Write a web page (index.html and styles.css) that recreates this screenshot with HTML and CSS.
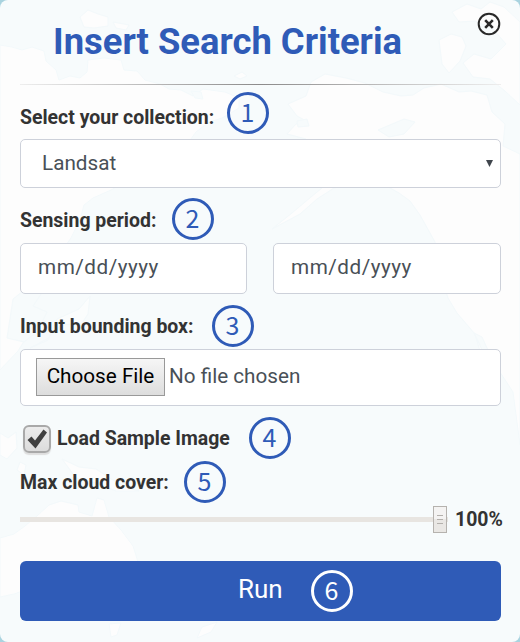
FILE: index.html
```html
<!DOCTYPE html>
<html lang="en">
<head>
<meta charset="utf-8">
<title>Insert Search Criteria</title>
<link rel="stylesheet" href="styles.css">
</head>
<body>
<main class="panel">
  <svg class="map" viewBox="0 0 520 642" aria-hidden="true">
    <path d="M0 45L12 47 22 50 32 47 44 51 46 61 56 70 59 80 70 76 80 78 87 72 88 60 104 58 121 60 124 70 137 71 145 80 160 84 169 89 181 90 193 96 203 89 225 92 239 98 239 108 222 118 209 122 196 132 188 143 178 151 161 158 145 170 127 181 111 190 93 198 84 205 80 220 71 238 61 252 58 270 41 280 27 293 24 309 30 332 18 351 0 370Z"/>
    <path d="M80 17L88 10 98 14 108 17 108 26 94 28 84 27ZM113 22L129 25 126 30 116 28ZM234 76L242 72 247 76 240 79Z"/>
    <path d="M288 104L306 96 311 82 325 74 346 78 365 83 383 92 401 96 413 95 424 88 441 84 459 92 471 91 487 95 492 112 505 124 503 146 520 154V445L513 392 496 366 480 351 475 334 457 313 448 298 439 269 435 242 420 215 410 201 399 193 383 184 358 182 334 188 317 199 300 214 272 229 292 213 311 197 322 188 306 180 294 164 290 151 306 139 287 134 296 124 308 122 297 116Z"/>
    <path d="M439 40L451 34 462 37 466 46 460 61 449 73 442 64ZM452 12L467 4 481 9 490 2 504 7 520 22V105L505 91 490 79 473 77 463 63 474 54 491 59 506 44 493 29 475 21 459 22Z"/>
    <path d="M0 538L14 534 25 526 37 516 49 505 61 501 78 505 79 512 92 516 97 498 104 500 109 517 121 530 133 546 139 565 129 583 114 603 96 607 80 595 61 586 31 588 14 594 0 597ZM109 624L121 623 117 635 111 637ZM202 627L217 622 211 632 197 638ZM62 459L79 467 96 469 111 479 128 488 139 491 116 491 96 483 76 478ZM0 433L8 438 16 432 17 448 7 459 0 455ZM20 462L26 465 24 475 17 470Z"/>
    <path class="sea" d="M378 130L404 119 415 122 404 134 389 137ZM297 121L307 119 309 126 298 127ZM474 333L482 337 487 348 499 365 486 358ZM191 91L201 92 203 99 195 98ZM13 299L28 287 41 294 33 306 47 312 38 331 24 342 7 338Z"/>
    <path class="coast" d="M30 348L48 340 57 319 79 309 90 296 88 314 82 323 61 325 47 339Z"/>
  </svg>
  <header class="head">
    <h1 class="title">Insert Search Criteria</h1>
    <svg class="close" viewBox="0 0 24 24" role="img" aria-label="Close"><circle cx="12" cy="12" r="10.3"/><path d="M8.2 8.2L15.8 15.8M15.8 8.2L8.2 15.8"/></svg>
  </header>
  <div class="rule"></div>
  <form class="form">
    <div class="row collection"><label class="label">Select your collection:</label><span class="step">1</span></div>
    <div class="field select"><span class="value">Landsat</span><svg class="arrow" viewBox="0 0 7 7"><path d="M0 0H7L3.5 7Z"/></svg></div>
    <div class="row period"><label class="label">Sensing period:</label><span class="step">2</span></div>
    <div class="dates">
      <div class="field date"><span class="value">mm/dd/yyyy</span></div>
      <div class="field date"><span class="value">mm/dd/yyyy</span></div>
    </div>
    <div class="row bounds"><label class="label">Input bounding box:</label><span class="step">3</span></div>
    <div class="field file"><span class="choose"><span class="choose-text">Choose File</span></span><span class="value">No file chosen</span></div>
    <div class="row sample">
      <span class="check"><svg class="tick" viewBox="0 0 22 22"><path d="M1.5 12L5.5 8.5 9 12.5 17.5 1.5 21 4.5 9.5 20.5Z"/></svg></span>
      <label class="label">Load Sample Image</label><span class="step">4</span>
    </div>
    <div class="row cloud"><label class="label">Max cloud cover:</label><span class="step">5</span></div>
    <div class="slider">
      <div class="track"><span class="thumb"><i></i><i></i><i></i></span></div>
      <span class="label percent">100%</span>
    </div>
    <div class="run"><span class="run-text">Run</span><span class="step light">6</span></div>
  </form>
</main>
</body>
</html>
```
FILE: styles.css
```css
* { box-sizing: border-box; }
body { margin: 0; background: #a9d3df; font-family: Roboto, sans-serif; color: #333; }
.panel { position: relative; width: 520px; height: 642px; padding: 0 19px 0 20px; border-radius: 8px; overflow: hidden; background: #f7fbfc; }
.map { position: absolute; left: 0; top: 0; width: 520px; height: 642px; fill: #fdfdfd; stroke: #f3f9fb; stroke-width: 1; }
.sea { fill: #f7fbfc; }
.coast { fill: #fbfdfd; }
.head, .rule, .form { position: relative; }
.head { display: flex; justify-content: space-between; height: 84px; padding-left: 33px; }
.title { margin: 21px 0 0; font-size: 36.4px; line-height: 42px; font-weight: 700; color: #2f5bb7; white-space: nowrap; }
.close { width: 24px; height: 24px; margin-top: 12px; fill: none; stroke: #292929; stroke-width: 2; }
.close path { stroke-width: 2.6; }
.rule { height: 1px; background: linear-gradient(90deg, #eee, #8c8b8b, #eee); }
.row { display: flex; align-items: center; height: 42px; }
.label { font-size: 19.45px; line-height: 24px; font-weight: 700; white-space: nowrap; }
.step { flex: none; display: flex; align-items: center; justify-content: center; width: 42px; height: 42px; padding: 0 1px 3px 0; border: 3px solid #2f5bb7; border-radius: 50%; color: #2f5bb7; font: 25px/33px "Noto Sans CJK SC", sans-serif; }
.collection { margin-top: 7px; }
.collection .label { width: 207px; margin-top: 10px; }
.period { margin-top: 10px; }
.period .label { width: 152px; margin-top: 4px; }
.bounds { margin-top: 11px; }
.bounds .label { width: 192px; margin-top: 2px; }
.sample { margin-top: 11px; }
.sample .label { width: 192px; margin-top: 2px; }
.cloud { margin-top: 2px; }
.cloud .label { width: 164px; margin-top: 2px; }
.field { display: flex; align-items: center; background: #fff; border: 1px solid #cdd1da; border-radius: 5px; font-size: 20.7px; line-height: 24px; color: #495057; white-space: nowrap; }
.select { justify-content: space-between; height: 49px; margin-top: 5px; padding: 0 7px 1px 21px; }
.arrow { width: 7px; height: 7px; fill: #40464d; }
.dates { display: grid; grid-template-columns: 227px 228px; justify-content: space-between; margin-top: 3px; }
.date { height: 51px; padding: 0 16px 3px 17px; letter-spacing: 0.5px; }
.file { height: 57px; margin-top: 2px; padding: 0 15px 2px; gap: 4px; }
.file .value { margin-top: -2px; }
.choose { display: flex; align-items: center; justify-content: center; width: 129px; height: 38px; border: 1px solid #999; background: linear-gradient(#f6f6f6, #ddd); color: #000; }
.choose-text { margin-top: -2px; }
.check { flex: none; display: grid; place-items: center; width: 28px; height: 28px; margin: 2px 6px 0 3px; border: 2px solid #a9a9a9; border-radius: 6px; background: linear-gradient(#ececec, #dcdcdc); box-shadow: 0 2px 1px #dedede; }
.tick { width: 22px; height: 22px; fill: #404040; }
.slider { display: flex; align-items: center; width: 490px; height: 32px; }
.track { flex: none; display: flex; align-items: center; justify-content: flex-end; width: 428px; height: 5px; padding-right: 1px; background: #e8e5e1; }
.thumb { display: flex; flex-direction: column; align-items: center; justify-content: center; gap: 3px; flex: none; width: 14px; height: 27px; border: 1px solid #b5b2ae; background: linear-gradient(#f4f3f2 50%, #e9e7e4 50%); }
.thumb i { width: 6px; height: 1px; background: #b3b0ac; }
.percent { margin: 2px 0 0 7px; }
.run { display: flex; align-items: center; height: 60px; margin-top: 26px; padding-left: 218px; border-radius: 6px; background: #2f5bb7; color: #fff; font-size: 26px; }
.run-text { width: 73px; margin-top: -4px; }
.light { color: #fff; border-color: #fff; }
```
